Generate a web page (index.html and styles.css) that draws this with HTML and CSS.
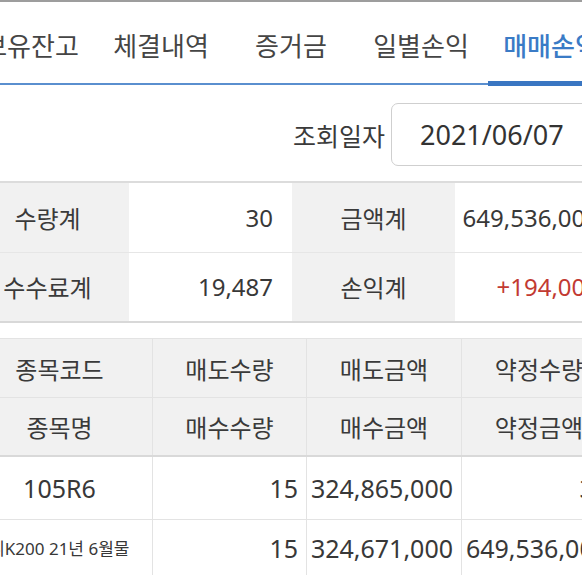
FILE: index.html
```html
<!DOCTYPE html>
<html lang="ko">
<head>
<meta charset="utf-8">
<title>매매손익</title>
<link rel="stylesheet" href="styles.css">
</head>
<body>
<div class="page">
  <nav class="tabs">
    <div class="tab">보유잔고</div>
    <div class="tab">체결내역</div>
    <div class="tab">증거금</div>
    <div class="tab">일별손익</div>
    <div class="tab active">매매손익</div>
  </nav>
  <div class="date-row">
    <span class="date-label">조회일자</span>
    <div class="date-input">2021/06/07</div>
  </div>
  <table class="summary">
    <colgroup><col class="c163"><col class="c163"><col class="c163"><col class="c163"></colgroup>
    <tr>
      <th>수량계</th><td>30</td>
      <th>금액계</th><td>649,536,000</td>
    </tr>
    <tr>
      <th>수수료계</th><td>19,487</td>
      <th>손익계</th><td class="plus">+194,000</td>
    </tr>
  </table>
  <table class="detail">
    <colgroup><col class="c186"><col class="c154"><col class="c155"><col class="c155"></colgroup>
    <thead>
      <tr class="h1"><th>종목코드</th><th>매도수량</th><th>매도금액</th><th>약정수량</th></tr>
      <tr class="h2"><th>종목명</th><th>매수수량</th><th>매수금액</th><th>약정금액</th></tr>
    </thead>
    <tbody>
      <tr class="b1"><td class="code">105R6</td><td class="num">15</td><td class="num">324,865,000</td><td class="num">30</td></tr>
      <tr class="b2"><td class="name">미니K200 21년 6월물</td><td class="num">15</td><td class="num">324,671,000</td><td class="num">649,536,000</td></tr>
    </tbody>
  </table>
</div>
</body>
</html>
```

FILE: styles.css
```css
html, body {
  margin: 0;
  padding: 0;
  background: #fff;
  overflow: hidden;
}
body {
  font-family: "Noto Sans", "Noto Sans CJK KR", sans-serif;
  color: #383838;
}
.page {
  width: 652px;
  margin-left: -34px;
  border-top: 2px solid #9d9d9d;
}
.tabs {
  display: flex;
  height: 81px;
  border-bottom: 2px solid #5a8fcf;
}
.tab {
  position: relative;
  flex: 0 0 130px;
  display: flex;
  align-items: center;
  justify-content: center;
  padding-top: 4px;
  font-size: 26px;
  color: #454545;
  white-space: nowrap;
}
.tab.active {
  color: #3a7bc6;
  font-weight: 500;
}
.tab.active::after {
  content: "";
  position: absolute;
  left: 2px;
  right: 0;
  bottom: -3px;
  height: 5px;
  background: #3a76c2;
}
.date-row {
  display: flex;
  justify-content: flex-end;
  align-items: center;
  gap: 6px;
  padding: 18px 5px 15px 0;
}
.date-label {
  font-size: 25px;
  color: #3a3a3a;
}
.date-input {
  width: 192px;
  height: 61px;
  padding-left: 28px;
  border: 1px solid #cfcfcf;
  border-radius: 7px;
  display: flex;
  align-items: center;
  font-size: 27px;
  color: #333;
}
table {
  border-collapse: collapse;
  table-layout: fixed;
  width: 652px;
}
.c163 { width: 163px; }
.c186 { width: 186px; }
.c154 { width: 154px; }
.c155 { width: 155px; }
.summary {
  border-top: 2px solid #dcdcdc;
  border-bottom: 2px solid #d8d8d8;
}
.summary tr {
  height: 70px;
}
.summary tr + tr {
  border-top: 1px solid #e6e6e6;
}
.summary th {
  background: #f1f1f1;
  font-weight: normal;
  font-size: 24px;
  color: #3a3a3a;
  text-align: center;
  padding: 0;
}
.summary td {
  font-size: 24px;
  text-align: right;
  padding: 0 19px 0 0;
  white-space: nowrap;
  color: #383838;
}
.summary td.plus {
  color: #c23a32;
}
.detail {
  width: 650px;
  margin-top: 15px;
  border-top: 1px solid #e2e2e2;
}
.detail th,
.detail td {
  border: 1px solid #e3e3e3;
  padding: 0;
  white-space: nowrap;
  overflow: hidden;
}
.detail th {
  background: #f1f1f1;
  font-weight: normal;
  font-size: 24px;
  color: #3a3a3a;
  text-align: center;
}
.detail tr.h1 { height: 59px; }
.detail tr.h2 { height: 58px; }
.detail thead tr.h2 th {
  border-bottom: 2px solid #d9d9d9;
}
.detail tr.b1 { height: 64px; }
.detail tr.b2 { height: 56px; }
.detail td {
  font-size: 25px;
  color: #383838;
}
.detail td.code {
  text-align: center;
}
.detail td.name {
  text-align: center;
  font-size: 17px;
  padding-right: 16px;
}
.detail td.num {
  text-align: right;
  padding-right: 8px;
}
```
